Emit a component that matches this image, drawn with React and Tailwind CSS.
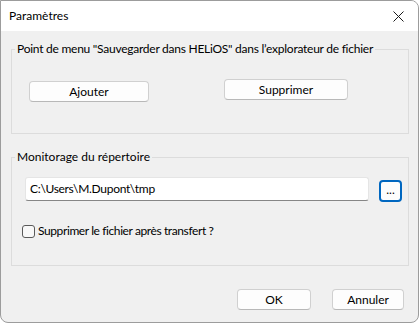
import React from "react";

function Btn({ children, className = "" }) {
  return (
    <div
      className={
        "flex items-center justify-center rounded-[4px] border border-[#d0d0d0] border-b-[#b8b8b8] bg-[#fdfdfd] text-[12px] text-black " +
        className
      }
    >
      {children}
    </div>
  );
}

export default function App() {
  return (
    <div
      className="w-[419px] h-[323px] bg-white"
      style={{ fontFamily: '"Segoe UI", Lato, "Liberation Sans", sans-serif' }}
    >
      <div className="flex flex-col w-[419px] h-[323px] bg-[#f0f0f0] border border-[#9c9c9c] rounded-tr-[8px] rounded-b-[8px] overflow-hidden">
        <div className="h-[30px] bg-white flex items-center justify-between pl-[8px] pr-[12px] shrink-0">
          <span className="text-[12px] text-black">Paramètres</span>
          <svg width="11" height="11" viewBox="0 0 11 11" className="mr-[2px]">
            <path d="M0.5 0.5 L10.5 10.5 M10.5 0.5 L0.5 10.5" stroke="#1a1a1a" strokeWidth="1" />
          </svg>
        </div>
        <div className="flex flex-col px-[10px] pt-[10px]">
          <fieldset className="border border-[#dcdcdc] h-[93px] w-[398px]">
            <legend className="ml-[3px] px-[2px] text-[12px] leading-[16px] text-black tracking-[-0.25px]">
              Point de menu "Sauvegarder dans HELiOS" dans l’explorateur de fichier
            </legend>
            <div className="flex items-start pl-[17px] pt-[22px]">
              <Btn className="w-[120px] h-[21px] mt-[2px]">Ajouter</Btn>
              <Btn className="w-[124px] h-[21px] ml-[75px]">Supprimer</Btn>
            </div>
          </fieldset>
          <fieldset className="border border-[#dcdcdc] h-[117px] w-[398px] mt-[15px]">
            <legend className="ml-[3px] px-[2px] text-[12px] leading-[16px] text-black">
              Monitorage du répertoire
            </legend>
            <div className="flex items-start pl-[13px] pt-[12px]">
              <div className="w-[344px] h-[24px] bg-white border border-[#e5e5e5] border-b-[#868686] rounded-[3px] flex items-center pl-[4px] text-[12px] text-black tracking-[-0.3px]">
                C:\Users\M.Dupont\tmp
              </div>
              <div className="ml-[10px] mt-[3px] w-[23px] h-[22px] rounded-[4px] border-2 border-[#0067c0] bg-[#fdfdfd] flex items-center justify-center text-[12px] text-black leading-none pb-[3px]">
                ...
              </div>
            </div>
            <div className="flex items-center pl-[10px] mt-[20px]">
              <div className="w-[13px] h-[13px] rounded-[3px] border border-[#5a5a5a] bg-[#f8f8f8]" />
              <span className="ml-[3px] text-[12px] text-black tracking-[-0.4px]">Supprimer le fichier après transfert ?</span>
            </div>
          </fieldset>
          <div className="flex justify-end gap-[21px] mt-[23px] pr-[4px]">
            <Btn className="w-[74px] h-[21px]">OK</Btn>
            <Btn className="w-[72px] h-[21px]">Annuler</Btn>
          </div>
        </div>
      </div>
    </div>
  );
}
